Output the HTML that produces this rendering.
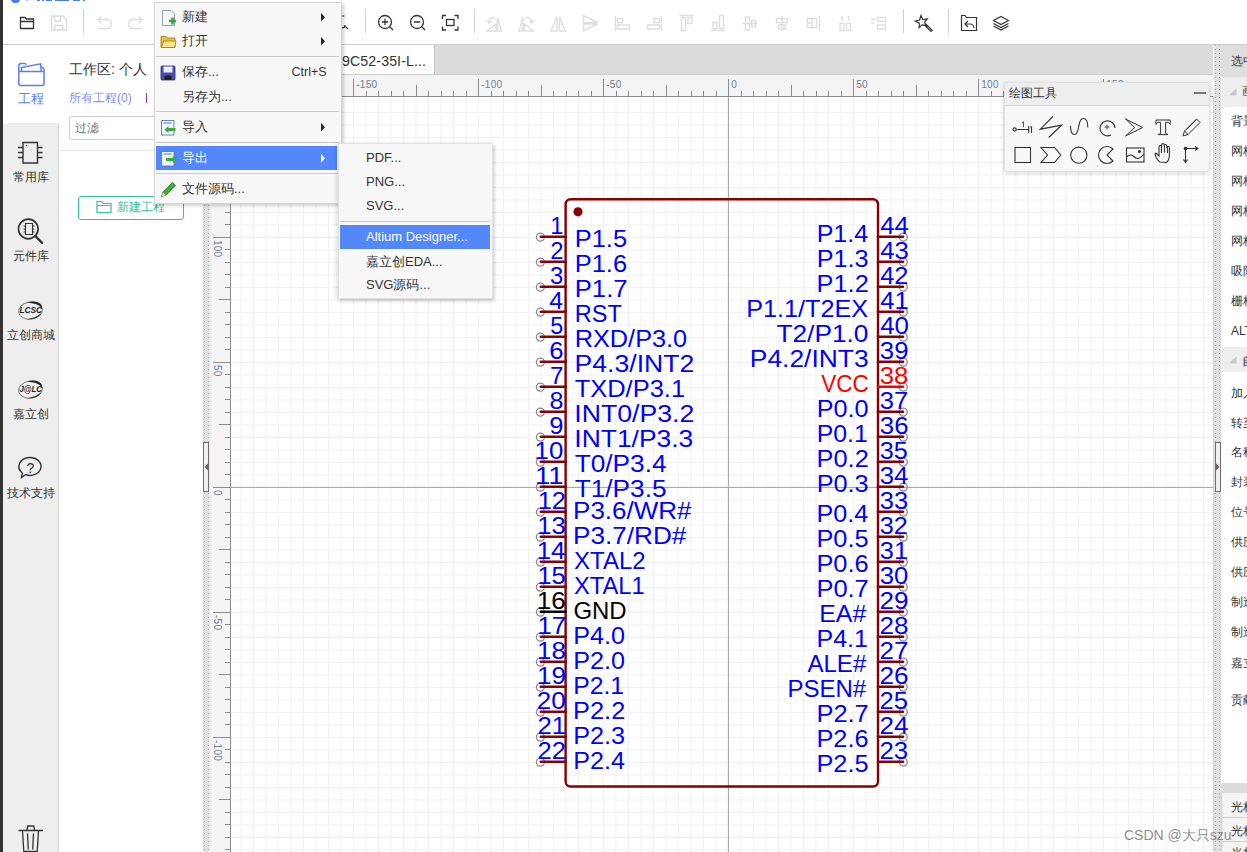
<!DOCTYPE html>
<html><head><meta charset="utf-8">
<style>
html,body{margin:0;padding:0;}
body{width:1247px;height:852px;overflow:hidden;position:relative;background:#fff;font-family:"Liberation Sans",sans-serif;color:#333;}
.abs{position:absolute;}
svg{display:block;}
.menu{position:absolute;background:#f8f8f8;border:1px solid #d4d4d4;box-shadow:2px 2px 3px rgba(0,0,0,0.18);}
.mi{position:absolute;left:0;right:0;height:24px;font-size:13px;line-height:24px;color:#333;}
.sep{position:absolute;left:2px;right:2px;height:0;border-top:1px solid #c8c8c8;border-bottom:1px solid #fff;}
.navt{position:absolute;left:3px;width:55px;text-align:center;font-size:12px;color:#333;line-height:14px;white-space:nowrap;}
.rp{position:absolute;left:1231px;font-size:12px;color:#333;line-height:14px;white-space:nowrap;}
</style></head>
<body>
<!-- canvas -->
<svg class="abs" style="left:0;top:0" width="1247" height="852" viewBox="0 0 1247 852">
<path d="M240.90 96V852M253.40 96V852M265.90 96V852M278.40 96V852M290.90 96V852M303.40 96V852M315.90 96V852M328.40 96V852M340.90 96V852M353.40 96V852M365.90 96V852M378.40 96V852M390.90 96V852M403.40 96V852M415.90 96V852M428.40 96V852M440.90 96V852M453.40 96V852M465.90 96V852M478.40 96V852M490.90 96V852M503.40 96V852M515.90 96V852M528.40 96V852M540.90 96V852M553.40 96V852M565.90 96V852M578.40 96V852M590.90 96V852M603.40 96V852M615.90 96V852M628.40 96V852M640.90 96V852M653.40 96V852M665.90 96V852M678.40 96V852M690.90 96V852M703.40 96V852M715.90 96V852M728.40 96V852M740.90 96V852M753.40 96V852M765.90 96V852M778.40 96V852M790.90 96V852M803.40 96V852M815.90 96V852M828.40 96V852M840.90 96V852M853.40 96V852M865.90 96V852M878.40 96V852M890.90 96V852M903.40 96V852M915.90 96V852M928.40 96V852M940.90 96V852M953.40 96V852M965.90 96V852M978.40 96V852M990.90 96V852M1003.40 96V852M1015.90 96V852M1028.40 96V852M1040.90 96V852M1053.40 96V852M1065.90 96V852M1078.40 96V852M1090.90 96V852M1103.40 96V852M1115.90 96V852M1128.40 96V852M1140.90 96V852M1153.40 96V852M1165.90 96V852M1178.40 96V852M1190.90 96V852M1203.40 96V852M231 99.90H1213M231 112.40H1213M231 124.90H1213M231 137.40H1213M231 149.90H1213M231 162.40H1213M231 174.90H1213M231 187.40H1213M231 199.90H1213M231 212.40H1213M231 224.90H1213M231 237.40H1213M231 249.90H1213M231 262.40H1213M231 274.90H1213M231 287.40H1213M231 299.90H1213M231 312.40H1213M231 324.90H1213M231 337.40H1213M231 349.90H1213M231 362.40H1213M231 374.90H1213M231 387.40H1213M231 399.90H1213M231 412.40H1213M231 424.90H1213M231 437.40H1213M231 449.90H1213M231 462.40H1213M231 474.90H1213M231 487.40H1213M231 499.90H1213M231 512.40H1213M231 524.90H1213M231 537.40H1213M231 549.90H1213M231 562.40H1213M231 574.90H1213M231 587.40H1213M231 599.90H1213M231 612.40H1213M231 624.90H1213M231 637.40H1213M231 649.90H1213M231 662.40H1213M231 674.90H1213M231 687.40H1213M231 699.90H1213M231 712.40H1213M231 724.90H1213M231 737.40H1213M231 749.90H1213M231 762.40H1213M231 774.90H1213M231 787.40H1213M231 799.90H1213M231 812.40H1213M231 824.90H1213M231 837.40H1213M231 849.90H1213" stroke="#f0f0f0" stroke-width="1" fill="none"/>
<path d="M728.4 96V852M231 487.4H1213" stroke="#a0a0a0" stroke-width="1" fill="none"/>
<rect x="565.6" y="199.2" width="312.4" height="587.3" rx="5" ry="5" fill="none" stroke="#880000" stroke-width="2.4"/>
<circle cx="578" cy="211.8" r="4.6" fill="#880000"/>
<circle cx="540.4" cy="237.1" r="4" fill="none" stroke="#8c8c8c" stroke-width="1.3"/>
<line x1="540.8" y1="236.8" x2="565.6" y2="236.8" stroke="#880000" stroke-width="2.6" stroke-linecap="round"/>
<circle cx="540.4" cy="262.1" r="4" fill="none" stroke="#8c8c8c" stroke-width="1.3"/>
<line x1="540.8" y1="261.8" x2="565.6" y2="261.8" stroke="#880000" stroke-width="2.6" stroke-linecap="round"/>
<circle cx="540.4" cy="287.1" r="4" fill="none" stroke="#8c8c8c" stroke-width="1.3"/>
<line x1="540.8" y1="286.8" x2="565.6" y2="286.8" stroke="#880000" stroke-width="2.6" stroke-linecap="round"/>
<circle cx="540.4" cy="312.1" r="4" fill="none" stroke="#8c8c8c" stroke-width="1.3"/>
<line x1="540.8" y1="311.8" x2="565.6" y2="311.8" stroke="#880000" stroke-width="2.6" stroke-linecap="round"/>
<circle cx="540.4" cy="337.1" r="4" fill="none" stroke="#8c8c8c" stroke-width="1.3"/>
<line x1="540.8" y1="336.8" x2="565.6" y2="336.8" stroke="#880000" stroke-width="2.6" stroke-linecap="round"/>
<circle cx="540.4" cy="362.1" r="4" fill="none" stroke="#8c8c8c" stroke-width="1.3"/>
<line x1="540.8" y1="361.8" x2="565.6" y2="361.8" stroke="#880000" stroke-width="2.6" stroke-linecap="round"/>
<circle cx="540.4" cy="387.1" r="4" fill="none" stroke="#8c8c8c" stroke-width="1.3"/>
<line x1="540.8" y1="386.8" x2="565.6" y2="386.8" stroke="#880000" stroke-width="2.6" stroke-linecap="round"/>
<circle cx="540.4" cy="412.1" r="4" fill="none" stroke="#8c8c8c" stroke-width="1.3"/>
<line x1="540.8" y1="411.8" x2="565.6" y2="411.8" stroke="#880000" stroke-width="2.6" stroke-linecap="round"/>
<circle cx="540.4" cy="437.1" r="4" fill="none" stroke="#8c8c8c" stroke-width="1.3"/>
<line x1="540.8" y1="436.8" x2="565.6" y2="436.8" stroke="#880000" stroke-width="2.6" stroke-linecap="round"/>
<circle cx="540.4" cy="462.1" r="4" fill="none" stroke="#8c8c8c" stroke-width="1.3"/>
<line x1="540.8" y1="461.8" x2="565.6" y2="461.8" stroke="#880000" stroke-width="2.6" stroke-linecap="round"/>
<circle cx="540.4" cy="487.1" r="4" fill="none" stroke="#8c8c8c" stroke-width="1.3"/>
<line x1="540.8" y1="486.8" x2="565.6" y2="486.8" stroke="#880000" stroke-width="2.6" stroke-linecap="round"/>
<circle cx="540.4" cy="512.1" r="4" fill="none" stroke="#8c8c8c" stroke-width="1.3"/>
<line x1="540.8" y1="511.8" x2="565.6" y2="511.8" stroke="#880000" stroke-width="2.6" stroke-linecap="round"/>
<circle cx="540.4" cy="537.1" r="4" fill="none" stroke="#8c8c8c" stroke-width="1.3"/>
<line x1="540.8" y1="536.8" x2="565.6" y2="536.8" stroke="#880000" stroke-width="2.6" stroke-linecap="round"/>
<circle cx="540.4" cy="562.1" r="4" fill="none" stroke="#8c8c8c" stroke-width="1.3"/>
<line x1="540.8" y1="561.8" x2="565.6" y2="561.8" stroke="#880000" stroke-width="2.6" stroke-linecap="round"/>
<circle cx="540.4" cy="587.1" r="4" fill="none" stroke="#8c8c8c" stroke-width="1.3"/>
<line x1="540.8" y1="586.8" x2="565.6" y2="586.8" stroke="#880000" stroke-width="2.6" stroke-linecap="round"/>
<circle cx="540.4" cy="612.1" r="4" fill="none" stroke="#8c8c8c" stroke-width="1.3"/>
<line x1="540.8" y1="611.8" x2="565.6" y2="611.8" stroke="#000000" stroke-width="2.6" stroke-linecap="round"/>
<circle cx="540.4" cy="637.1" r="4" fill="none" stroke="#8c8c8c" stroke-width="1.3"/>
<line x1="540.8" y1="636.8" x2="565.6" y2="636.8" stroke="#880000" stroke-width="2.6" stroke-linecap="round"/>
<circle cx="540.4" cy="662.1" r="4" fill="none" stroke="#8c8c8c" stroke-width="1.3"/>
<line x1="540.8" y1="661.8" x2="565.6" y2="661.8" stroke="#880000" stroke-width="2.6" stroke-linecap="round"/>
<circle cx="540.4" cy="687.1" r="4" fill="none" stroke="#8c8c8c" stroke-width="1.3"/>
<line x1="540.8" y1="686.8" x2="565.6" y2="686.8" stroke="#880000" stroke-width="2.6" stroke-linecap="round"/>
<circle cx="540.4" cy="712.1" r="4" fill="none" stroke="#8c8c8c" stroke-width="1.3"/>
<line x1="540.8" y1="711.8" x2="565.6" y2="711.8" stroke="#880000" stroke-width="2.6" stroke-linecap="round"/>
<circle cx="540.4" cy="737.1" r="4" fill="none" stroke="#8c8c8c" stroke-width="1.3"/>
<line x1="540.8" y1="736.8" x2="565.6" y2="736.8" stroke="#880000" stroke-width="2.6" stroke-linecap="round"/>
<circle cx="540.4" cy="762.1" r="4" fill="none" stroke="#8c8c8c" stroke-width="1.3"/>
<line x1="540.8" y1="761.8" x2="565.6" y2="761.8" stroke="#880000" stroke-width="2.6" stroke-linecap="round"/>
<circle cx="903.3" cy="237.1" r="4" fill="none" stroke="#8c8c8c" stroke-width="1.3"/>
<line x1="878" y1="236.8" x2="903" y2="236.8" stroke="#880000" stroke-width="2.6" stroke-linecap="round"/>
<circle cx="903.3" cy="262.1" r="4" fill="none" stroke="#8c8c8c" stroke-width="1.3"/>
<line x1="878" y1="261.8" x2="903" y2="261.8" stroke="#880000" stroke-width="2.6" stroke-linecap="round"/>
<circle cx="903.3" cy="287.1" r="4" fill="none" stroke="#8c8c8c" stroke-width="1.3"/>
<line x1="878" y1="286.8" x2="903" y2="286.8" stroke="#880000" stroke-width="2.6" stroke-linecap="round"/>
<circle cx="903.3" cy="312.1" r="4" fill="none" stroke="#8c8c8c" stroke-width="1.3"/>
<line x1="878" y1="311.8" x2="903" y2="311.8" stroke="#880000" stroke-width="2.6" stroke-linecap="round"/>
<circle cx="903.3" cy="337.1" r="4" fill="none" stroke="#8c8c8c" stroke-width="1.3"/>
<line x1="878" y1="336.8" x2="903" y2="336.8" stroke="#880000" stroke-width="2.6" stroke-linecap="round"/>
<circle cx="903.3" cy="362.1" r="4" fill="none" stroke="#8c8c8c" stroke-width="1.3"/>
<line x1="878" y1="361.8" x2="903" y2="361.8" stroke="#880000" stroke-width="2.6" stroke-linecap="round"/>
<circle cx="903.3" cy="387.1" r="4" fill="none" stroke="#8c8c8c" stroke-width="1.3"/>
<line x1="878" y1="386.8" x2="903" y2="386.8" stroke="#ff0000" stroke-width="2.6" stroke-linecap="round"/>
<circle cx="903.3" cy="412.1" r="4" fill="none" stroke="#8c8c8c" stroke-width="1.3"/>
<line x1="878" y1="411.8" x2="903" y2="411.8" stroke="#880000" stroke-width="2.6" stroke-linecap="round"/>
<circle cx="903.3" cy="437.1" r="4" fill="none" stroke="#8c8c8c" stroke-width="1.3"/>
<line x1="878" y1="436.8" x2="903" y2="436.8" stroke="#880000" stroke-width="2.6" stroke-linecap="round"/>
<circle cx="903.3" cy="462.1" r="4" fill="none" stroke="#8c8c8c" stroke-width="1.3"/>
<line x1="878" y1="461.8" x2="903" y2="461.8" stroke="#880000" stroke-width="2.6" stroke-linecap="round"/>
<circle cx="903.3" cy="487.1" r="4" fill="none" stroke="#8c8c8c" stroke-width="1.3"/>
<line x1="878" y1="486.8" x2="903" y2="486.8" stroke="#880000" stroke-width="2.6" stroke-linecap="round"/>
<circle cx="903.3" cy="512.1" r="4" fill="none" stroke="#8c8c8c" stroke-width="1.3"/>
<line x1="878" y1="511.8" x2="903" y2="511.8" stroke="#880000" stroke-width="2.6" stroke-linecap="round"/>
<circle cx="903.3" cy="537.1" r="4" fill="none" stroke="#8c8c8c" stroke-width="1.3"/>
<line x1="878" y1="536.8" x2="903" y2="536.8" stroke="#880000" stroke-width="2.6" stroke-linecap="round"/>
<circle cx="903.3" cy="562.1" r="4" fill="none" stroke="#8c8c8c" stroke-width="1.3"/>
<line x1="878" y1="561.8" x2="903" y2="561.8" stroke="#880000" stroke-width="2.6" stroke-linecap="round"/>
<circle cx="903.3" cy="587.1" r="4" fill="none" stroke="#8c8c8c" stroke-width="1.3"/>
<line x1="878" y1="586.8" x2="903" y2="586.8" stroke="#880000" stroke-width="2.6" stroke-linecap="round"/>
<circle cx="903.3" cy="612.1" r="4" fill="none" stroke="#8c8c8c" stroke-width="1.3"/>
<line x1="878" y1="611.8" x2="903" y2="611.8" stroke="#880000" stroke-width="2.6" stroke-linecap="round"/>
<circle cx="903.3" cy="637.1" r="4" fill="none" stroke="#8c8c8c" stroke-width="1.3"/>
<line x1="878" y1="636.8" x2="903" y2="636.8" stroke="#880000" stroke-width="2.6" stroke-linecap="round"/>
<circle cx="903.3" cy="662.1" r="4" fill="none" stroke="#8c8c8c" stroke-width="1.3"/>
<line x1="878" y1="661.8" x2="903" y2="661.8" stroke="#880000" stroke-width="2.6" stroke-linecap="round"/>
<circle cx="903.3" cy="687.1" r="4" fill="none" stroke="#8c8c8c" stroke-width="1.3"/>
<line x1="878" y1="686.8" x2="903" y2="686.8" stroke="#880000" stroke-width="2.6" stroke-linecap="round"/>
<circle cx="903.3" cy="712.1" r="4" fill="none" stroke="#8c8c8c" stroke-width="1.3"/>
<line x1="878" y1="711.8" x2="903" y2="711.8" stroke="#880000" stroke-width="2.6" stroke-linecap="round"/>
<circle cx="903.3" cy="737.1" r="4" fill="none" stroke="#8c8c8c" stroke-width="1.3"/>
<line x1="878" y1="736.8" x2="903" y2="736.8" stroke="#880000" stroke-width="2.6" stroke-linecap="round"/>
<circle cx="903.3" cy="762.1" r="4" fill="none" stroke="#8c8c8c" stroke-width="1.3"/>
<line x1="878" y1="761.8" x2="903" y2="761.8" stroke="#880000" stroke-width="2.6" stroke-linecap="round"/>
<g font-family="Liberation Sans, sans-serif" font-size="23.8"><text transform="translate(574.71,246.80) scale(1.0689,1)" fill="#0000ff">P1.5</text><text transform="translate(550.28,234.10) scale(0.9943,1)" fill="#0000ff">1</text><text transform="translate(574.71,271.80) scale(1.0700,1)" fill="#0000ff">P1.6</text><text transform="translate(550.20,259.10) scale(1.0047,1)" fill="#0000ff">2</text><text transform="translate(574.69,296.80) scale(1.0804,1)" fill="#0000ff">P1.7</text><text transform="translate(550.09,284.10) scale(0.9999,1)" fill="#0000ff">3</text><text transform="translate(574.87,321.80) scale(0.9889,1)" fill="#0000ff">RST</text><text transform="translate(549.23,309.10) scale(1.0421,1)" fill="#0000ff">4</text><text transform="translate(574.72,346.80) scale(1.0635,1)" fill="#0000ff">RXD/P3.0</text><text transform="translate(550.27,334.10) scale(0.9812,1)" fill="#0000ff">5</text><text transform="translate(574.62,371.80) scale(1.1163,1)" fill="#0000ff">P4.3/INT2</text><text transform="translate(549.15,359.10) scale(1.0770,1)" fill="#0000ff">6</text><text transform="translate(574.74,396.80) scale(1.0699,1)" fill="#0000ff">TXD/P3.1</text><text transform="translate(550.04,384.10) scale(1.0178,1)" fill="#0000ff">7</text><text transform="translate(574.35,421.80) scale(1.1188,1)" fill="#0000ff">INT0/P3.2</text><text transform="translate(549.45,409.10) scale(1.0525,1)" fill="#0000ff">8</text><text transform="translate(574.37,446.80) scale(1.1094,1)" fill="#0000ff">INT1/P3.3</text><text transform="translate(549.28,434.10) scale(1.0748,1)" fill="#0000ff">9</text><text transform="translate(574.72,471.80) scale(1.1019,1)" fill="#0000ff">T0/P3.4</text><text transform="translate(534.56,459.10) scale(1.0853,1)" fill="#0000ff">10</text><text transform="translate(574.72,496.80) scale(1.1020,1)" fill="#0000ff">T1/P3.5</text><text transform="translate(535.04,484.10) scale(1.1570,1)" fill="#0000ff">11</text><text transform="translate(573.07,519.10) scale(1.0911,1)" fill="#0000ff">P3.6/WR&#35;</text><text transform="translate(537.77,509.10) scale(1.0655,1)" fill="#0000ff">12</text><text transform="translate(573.06,544.10) scale(1.0986,1)" fill="#0000ff">P3.7/RD&#35;</text><text transform="translate(537.28,534.10) scale(1.0779,1)" fill="#0000ff">13</text><text transform="translate(574.07,569.10) scale(1.0075,1)" fill="#0000ff">XTAL2</text><text transform="translate(536.70,559.10) scale(1.0864,1)" fill="#0000ff">14</text><text transform="translate(574.08,594.10) scale(0.9952,1)" fill="#0000ff">XTAL1</text><text transform="translate(537.48,584.10) scale(1.0678,1)" fill="#0000ff">15</text><text transform="translate(573.40,619.10) scale(1.0064,1)" fill="#000000">GND</text><text transform="translate(536.85,609.10) scale(1.0948,1)" fill="#000000">16</text><text transform="translate(573.13,644.10) scale(1.0586,1)" fill="#0000ff">P4.0</text><text transform="translate(537.41,634.10) scale(1.0795,1)" fill="#0000ff">17</text><text transform="translate(573.13,669.10) scale(1.0586,1)" fill="#0000ff">P2.0</text><text transform="translate(537.00,659.10) scale(1.0888,1)" fill="#0000ff">18</text><text transform="translate(573.17,694.10) scale(1.0401,1)" fill="#0000ff">P2.1</text><text transform="translate(537.04,684.10) scale(1.0912,1)" fill="#0000ff">19</text><text transform="translate(573.12,719.10) scale(1.0652,1)" fill="#0000ff">P2.2</text><text transform="translate(536.77,709.10) scale(1.0925,1)" fill="#0000ff">20</text><text transform="translate(573.13,744.10) scale(1.0613,1)" fill="#0000ff">P2.3</text><text transform="translate(537.40,734.10) scale(1.0780,1)" fill="#0000ff">21</text><text transform="translate(573.14,769.10) scale(1.0580,1)" fill="#0000ff">P2.4</text><text transform="translate(537.57,759.10) scale(1.0733,1)" fill="#0000ff">22</text><text transform="translate(816.64,241.50) scale(1.0537,1)" fill="#0000ff">P1.4</text><text transform="translate(880.23,234.10) scale(1.0879,1)" fill="#0000ff">44</text><text transform="translate(816.63,266.50) scale(1.0613,1)" fill="#0000ff">P1.3</text><text transform="translate(880.23,259.10) scale(1.0798,1)" fill="#0000ff">43</text><text transform="translate(816.62,291.50) scale(1.0652,1)" fill="#0000ff">P1.2</text><text transform="translate(880.24,284.10) scale(1.0681,1)" fill="#0000ff">42</text><text transform="translate(746.23,316.50) scale(1.0582,1)" fill="#0000ff">P1.1/T2EX</text><text transform="translate(880.24,309.10) scale(1.0727,1)" fill="#0000ff">41</text><text transform="translate(776.42,341.50) scale(1.1047,1)" fill="#0000ff">T2/P1.0</text><text transform="translate(880.23,334.10) scale(1.0869,1)" fill="#0000ff">40</text><text transform="translate(749.84,366.50) scale(1.1087,1)" fill="#0000ff">P4.2/INT3</text><text transform="translate(879.82,359.10) scale(1.0826,1)" fill="#0000ff">39</text><text transform="translate(821.31,391.50) scale(0.9459,1)" fill="#ff0000">VCC</text><text transform="translate(879.82,384.10) scale(1.0803,1)" fill="#ff0000">38</text><text transform="translate(816.63,416.50) scale(1.0586,1)" fill="#0000ff">P0.0</text><text transform="translate(879.83,409.10) scale(1.0713,1)" fill="#0000ff">37</text><text transform="translate(816.66,441.50) scale(1.0444,1)" fill="#0000ff">P0.1</text><text transform="translate(879.82,434.10) scale(1.0860,1)" fill="#0000ff">36</text><text transform="translate(816.62,466.50) scale(1.0652,1)" fill="#0000ff">P0.2</text><text transform="translate(879.84,459.10) scale(1.0600,1)" fill="#0000ff">35</text><text transform="translate(816.63,491.50) scale(1.0613,1)" fill="#0000ff">P0.3</text><text transform="translate(879.82,484.10) scale(1.0781,1)" fill="#0000ff">34</text><text transform="translate(816.44,521.50) scale(1.0580,1)" fill="#0000ff">P0.4</text><text transform="translate(879.83,509.10) scale(1.0698,1)" fill="#0000ff">33</text><text transform="translate(816.42,546.50) scale(1.0645,1)" fill="#0000ff">P0.5</text><text transform="translate(879.84,534.10) scale(1.0578,1)" fill="#0000ff">32</text><text transform="translate(816.42,571.50) scale(1.0656,1)" fill="#0000ff">P0.6</text><text transform="translate(879.84,559.10) scale(1.0625,1)" fill="#0000ff">31</text><text transform="translate(816.41,596.50) scale(1.0695,1)" fill="#0000ff">P0.7</text><text transform="translate(879.83,584.10) scale(1.0770,1)" fill="#0000ff">30</text><text transform="translate(819.26,621.50) scale(1.0458,1)" fill="#0000ff">EA&#35;</text><text transform="translate(879.49,609.10) scale(1.0983,1)" fill="#0000ff">29</text><text transform="translate(816.45,646.50) scale(1.0510,1)" fill="#0000ff">P4.1</text><text transform="translate(879.50,634.10) scale(1.0959,1)" fill="#0000ff">28</text><text transform="translate(807.45,671.50) scale(1.0108,1)" fill="#0000ff">ALE&#35;</text><text transform="translate(879.51,659.10) scale(1.0869,1)" fill="#0000ff">27</text><text transform="translate(787.43,696.50) scale(1.0106,1)" fill="#0000ff">PSEN&#35;</text><text transform="translate(879.49,684.10) scale(1.1017,1)" fill="#0000ff">26</text><text transform="translate(816.41,721.50) scale(1.0695,1)" fill="#0000ff">P2.7</text><text transform="translate(879.52,709.10) scale(1.0754,1)" fill="#0000ff">25</text><text transform="translate(816.42,746.50) scale(1.0656,1)" fill="#0000ff">P2.6</text><text transform="translate(879.50,734.10) scale(1.0935,1)" fill="#0000ff">24</text><text transform="translate(816.42,771.50) scale(1.0645,1)" fill="#0000ff">P2.5</text><text transform="translate(879.51,759.10) scale(1.0853,1)" fill="#0000ff">23</text></g>
<rect x="209" y="75" width="1004" height="21.5" fill="#f4f4f4"/>
<path d="M209 96.5H1213M241.50 91V96M253.50 91V96M266.50 91V96M278.50 91V96M291.50 85V96M303.50 91V96M316.50 91V96M328.50 91V96M341.50 91V96M353.50 79V96M366.50 91V96M378.50 91V96M391.50 91V96M403.50 91V96M416.50 85V96M428.50 91V96M441.50 91V96M453.50 91V96M466.50 91V96M478.50 79V96M491.50 91V96M503.50 91V96M516.50 91V96M528.50 91V96M541.50 85V96M553.50 91V96M566.50 91V96M578.50 91V96M591.50 91V96M603.50 79V96M616.50 91V96M628.50 91V96M641.50 91V96M653.50 91V96M666.50 85V96M678.50 91V96M691.50 91V96M703.50 91V96M716.50 91V96M728.50 79V96M741.50 91V96M753.50 91V96M766.50 91V96M778.50 91V96M791.50 85V96M803.50 91V96M816.50 91V96M828.50 91V96M841.50 91V96M853.50 79V96M866.50 91V96M878.50 91V96M891.50 91V96M903.50 91V96M916.50 85V96M928.50 91V96M941.50 91V96M953.50 91V96M966.50 91V96M978.50 79V96M991.50 91V96M1003.50 91V96M1016.50 91V96M1028.50 91V96M1041.50 85V96M1053.50 91V96M1066.50 91V96M1078.50 91V96M1091.50 91V96M1103.50 79V96M1116.50 91V96M1128.50 91V96M1141.50 91V96M1153.50 91V96M1166.50 85V96M1178.50 91V96M1191.50 91V96M1203.50 91V96" stroke="#8c8c8c" stroke-width="1" fill="none"/>
<g font-family="Liberation Sans, sans-serif" font-size="10" letter-spacing="0.3" fill="#6b7f95"><text x="356.20" y="87.7">-150</text><text x="481.20" y="87.7">-100</text><text x="606.20" y="87.7">-50</text><text x="731.20" y="87.7">0</text><text x="856.20" y="87.7">50</text><text x="981.20" y="87.7">100</text><text x="1106.20" y="87.7">150</text></g>
<rect x="209" y="96" width="22" height="756" fill="#f4f4f4"/>
<path d="M230.5 96.5V852M225 849.50H230.5M225 837.50H230.5M225 824.50H230.5M225 812.50H230.5M218.8 799.50H230.5M225 787.50H230.5M225 774.50H230.5M225 762.50H230.5M225 749.50H230.5M213 737.50H230.5M225 724.50H230.5M225 712.50H230.5M225 699.50H230.5M225 687.50H230.5M218.8 674.50H230.5M225 662.50H230.5M225 649.50H230.5M225 637.50H230.5M225 624.50H230.5M213 612.50H230.5M225 599.50H230.5M225 587.50H230.5M225 574.50H230.5M225 562.50H230.5M218.8 549.50H230.5M225 537.50H230.5M225 524.50H230.5M225 512.50H230.5M225 499.50H230.5M213 487.50H230.5M225 474.50H230.5M225 462.50H230.5M225 449.50H230.5M225 437.50H230.5M218.8 424.50H230.5M225 412.50H230.5M225 399.50H230.5M225 387.50H230.5M225 374.50H230.5M213 362.50H230.5M225 349.50H230.5M225 337.50H230.5M225 324.50H230.5M225 312.50H230.5M218.8 299.50H230.5M225 287.50H230.5M225 274.50H230.5M225 262.50H230.5M225 249.50H230.5M213 237.50H230.5M225 224.50H230.5M225 212.50H230.5M225 199.50H230.5M225 187.50H230.5M218.8 174.50H230.5M225 162.50H230.5M225 149.50H230.5M225 137.50H230.5M225 124.50H230.5M213 112.50H230.5M225 99.50H230.5" stroke="#8c8c8c" stroke-width="1" fill="none"/>
<g font-family="Liberation Sans, sans-serif" font-size="10" letter-spacing="0.3" fill="#6b7f95"><text transform="translate(214,739.90) rotate(90)">-100</text><text transform="translate(214,614.90) rotate(90)">-50</text><text transform="translate(214,489.90) rotate(90)">0</text><text transform="translate(214,364.90) rotate(90)">50</text><text transform="translate(214,239.90) rotate(90)">100</text><text transform="translate(214,114.90) rotate(90)">150</text></g>
</svg>

<!-- tab bar -->
<div class="abs" style="left:209px;top:44px;width:1004px;height:31px;background:#dcdcdc;border-top:1px solid #c8c8c8;box-sizing:border-box;"></div>
<div class="abs" style="left:209px;top:45px;width:226px;height:29px;background:#fff;border-right:1px solid #c6c6c6;box-sizing:border-box;"></div>
<div class="abs" style="left:342px;top:51.5px;font-size:14.2px;color:#333;line-height:18px;white-space:nowrap;letter-spacing:0.1px;">9C52-35I-L...</div>
<div class="abs" style="left:209px;top:74px;width:1004px;height:1px;background:#cdcdcd;"></div>

<!-- toolbar -->
<div class="abs" style="left:0;top:0;width:1247px;height:44px;background:#fff;"></div>
<div class="abs" style="left:0;top:44px;width:1247px;height:1px;background:#cfcfcf;"></div>
<!-- title fragment -->
<div class="abs" style="left:11px;top:-5.5px;width:8.5px;height:8.5px;border-radius:50%;background:#4a7cf0;"></div>
<div class="abs" style="left:25px;top:0;width:4px;height:1px;background:#c8d4f8;"></div>
<div class="abs" style="left:37px;top:0;width:3px;height:1.2px;background:#4a7cf0;"></div>
<div class="abs" style="left:41.5px;top:0;width:2.5px;height:1.2px;background:#4a7cf0;"></div>
<div class="abs" style="left:46px;top:0;width:5.5px;height:1.2px;background:#4a7cf0;"></div>
<div class="abs" style="left:55px;top:0;width:14px;height:1.2px;background:#4a7cf0;"></div>
<div class="abs" style="left:72.5px;top:0;width:7.5px;height:1.2px;background:#4a7cf0;"></div>
<div class="abs" style="left:82.5px;top:0;width:2px;height:1.2px;background:#4a7cf0;"></div>
<svg class="abs" style="left:0;top:0" width="1247" height="44" viewBox="0 0 1247 44">
<g fill="none" stroke-width="1.3">
 <!-- open folder -->
 <path d="M20.5 28.5V17.5h4.5l1.5 1.5h7V28.5Z M20.5 21.5h13" stroke="#333"/>
 <!-- save -->
 <path d="M51.5 16h11.5l3.5 3.5V30H51.5Z M54.5 16v5h6v-5 M54.5 30v-4.5h8V30" stroke="#dcdcdc" stroke-width="1.5"/>
 <!-- undo redo -->
 <path d="M98 19.5h9a4.5 4.5 0 0 1 0 9h-9 M101 16.5l-3 3 3 3" stroke="#dcdcdc" stroke-width="1.5"/>
 <path d="M142 19.5h-9a4.5 4.5 0 0 0 0 9h9 M139 16.5l3 3-3 3" stroke="#dcdcdc" stroke-width="1.5"/>
 <!-- zoom in / out / fit -->
 <circle cx="385" cy="22" r="6.5" stroke="#333"/><path d="M389.5 26.5l3.5 3.5 M385 18.8v6.4 M381.8 22h6.4" stroke="#333"/>
 <circle cx="417" cy="22" r="6.5" stroke="#333"/><path d="M421.5 26.5l3.5 3.5 M413.8 22h6.4" stroke="#333"/>
 <path d="M442.5 19v-3.5h3.5 M454.5 15.5h3.5v3.5 M458 26.5v3.5h-3.5 M446 30h-3.5v-3.5" stroke="#333"/>
 <rect x="446.5" y="19.5" width="7.5" height="6" stroke="#333"/>
 <!-- partial icon behind menu -->
 <path d="M341 16h3.5 M342 22a3 3 0 1 0 3 3 M345.5 26.5l2.5 2.5" stroke="#333" stroke-width="1.2"/>
</g>
<g fill="none" stroke="#dedede" stroke-width="1.4">
 <!-- rotate left -->
 <path d="M497.5 17.5L501.5 31h-4z M496 24L487 31h9z M495 17.5a5 5 0 0 0-6 4.5 M487 20.5l2 2.5 2.5-2"/>
 <!-- rotate right -->
 <path d="M523 17.5L519 31h4z M524.5 24L533.5 31h-9z M525.5 17.5a5 5 0 0 1 6 4.5 M533.5 20.5l-2 2.5-2.5-2"/>
 <!-- flip h -->
 <path d="M557 16.5L551 31h6z M559.5 16.5L565.5 31h-6z"/>
 <!-- flip v -->
 <path d="M583.5 15.5v7l14 0z M583.5 30.5v-6.5l14 0z"/>
 <!-- align left -->
 <path d="M615.5 16v15 M617.5 18.5h5v4h-5z M617.5 25h12v4h-12z"/>
 <!-- align right -->
 <path d="M661.5 16v15 M654 18.5h5.5v4H654z M647.5 25h12v4h-12z"/>
 <!-- align top -->
 <path d="M679 15.5h15 M681.5 17.5v13h4v-13z M688 17.5v6h4v-6z"/>
 <!-- align bottom -->
 <path d="M710.5 30.5h15 M713 28.5v-6h4v6z M719.5 28.5v-13h4v13z"/>
 <!-- align vcenter -->
 <path d="M742.5 23.5h15 M745.5 17v13h4V17z M751.5 20.5v6h4v-6z"/>
 <!-- align hcenter -->
 <path d="M782 16v15 M776.5 18.5h11v4h-11z M778.5 25h7v4h-7z"/>
 <!-- distribute -->
 <path d="M807.5 18.5h9v9h-9z M812 18.5v9 M807.5 23h4.5 M819.5 16v15"/>
 <path d="M840 23.5v7h4v-7z M846.5 23.5v7h4v-7z M842 16v5 M848.5 16v5"/>
 <path d="M871 23h4 M877.5 17.5h8v4h-8z M877.5 25h8v4h-8z M871 19.5h4"/>
</g>
<g fill="none" stroke="#cfcfcf" stroke-width="1">
 <path d="M83.5 9v24.5 M365.5 9v24.5 M474.5 9v24.5 M903.5 9v24.5 M948.5 9v24.5"/>
</g>
<g fill="none" stroke="#333" stroke-width="1.2">
 <!-- magic wand -->
 <path d="M921 15.5l1.8 4.2 4.5-0.8-2.8 3.5 2 3.7-4.2-1.5-3.2 3 0.2-4.4-4-2 4.3-1.2z M924.5 25l6.5 6.5 1.2-1.2-6.5-6.5"/>
 <!-- folder back -->
 <path d="M961.5 30.5V15.5h3.5l1.5 2h10v13Z M968 21l-3 3 3 3 M965 24h5a4 4 0 0 1 4 4"/>
 <!-- layers -->
 <path d="M1001 16.5l7.5 4-7.5 4-7.5-4z M993.5 23.5l7.5 4 7.5-4 M993.5 26l7.5 4 7.5-4"/>
</g>
</svg>


<!-- left nav -->
<div class="abs" style="left:0;top:0;width:3px;height:852px;background:#333;"></div>
<div class="abs" style="left:3px;top:123px;width:55px;height:729px;background:#eeeeee;border-right:1px solid #d8d8d8;"></div>
<svg class="abs" style="left:3px;top:45px" width="55" height="807" viewBox="3 45 55 807">
<g fill="none" stroke-width="1.6">
 <!-- project folder (blue) -->
 <path d="M18.8 71.5H44V83.5a2 2 0 0 1-2 2H20.8a2 2 0 0 1-2-2Z M18.8 72V66a2.5 2.5 0 0 1 2.5-2.5H24.5a2 2 0 0 1 1.8 1.2 M21.8 71.2L21.3 67.6 40.5 63.8 41.3 71.2 M41.8 67.5a2 2 0 0 1 2.2 2V72" stroke="#5b7cfa" stroke-width="1.5"/>
 <!-- chip -->
 <path d="M23 142.5h14.5v20.5H23Z M18 147.5h5 M18 152.5h5 M18 157.5h5 M37.5 147.5h5 M37.5 152.5h5 M37.5 157.5h5" stroke="#333" stroke-width="1.4"/>
 <circle cx="26.5" cy="145.5" r="0.8" fill="#333" stroke="none"/>
 <!-- magnifier -->
 <circle cx="28.3" cy="229" r="9.8" stroke="#333" stroke-width="1.7"/>
 <path d="M35.3 236l6.8 6.8" stroke="#333" stroke-width="2.4" stroke-linecap="round"/>
 <path d="M25.5 223.5h7v11h-7z M23.5 226h2 M23.5 229h2 M23.5 232h2 M32.5 226h2 M32.5 229h2 M32.5 232h2" stroke="#333" stroke-width="1.1"/>
 <!-- help bubble -->
 <path d="M29.5 457.5a11 9 0 1 1-4 17.2l-4 2.8 0.8-4.5a11 9 0 0 1 7.2-15.5z" stroke="#333" stroke-width="1.4"/>
 <!-- trash -->
 <path d="M18.5 830.5h24.5 M27 830l0.8-4h6l0.8 4 M22.5 831l1.3 20.5h13.4l1.3-20.5 M27.5 833.5l0.8 16 M33.5 833.5l-0.8 16" stroke="#333" stroke-width="1.3"/>
</g>
<g font-family="Liberation Sans, sans-serif" font-style="italic" font-weight="bold" font-size="9.5" fill="#222">
 <text x="19.5" y="313" textLength="22.5" lengthAdjust="spacingAndGlyphs">LCSC</text>
 <text x="19.5" y="392" textLength="22.5" lengthAdjust="spacingAndGlyphs">J@LC</text>
</g>
<g fill="none" stroke="#333" stroke-width="0.6">
 <ellipse cx="30.5" cy="310.6" rx="12" ry="8.6" transform="rotate(-8 30.5 310.6)"/>
 <ellipse cx="30.5" cy="389.6" rx="12" ry="8.6" transform="rotate(-8 30.5 389.6)"/>
</g>
<g fill="#222">
 <path d="M27 302.5q10-3 14.5 2.5q1.5 2-0.5 4q0.5-5-14-6.5z"/>
 <path d="M41.5 313q-3 6-15 6.5q10-2 15-6.5z" />
 <path d="M27 381.5q10-3 14.5 2.5q1.5 2-0.5 4q0.5-5-14-6.5z"/>
 <path d="M41.5 392q-3 6-15 6.5q10-2 15-6.5z" />
</g>
<text x="39.5" y="473" font-family="Liberation Sans, sans-serif" font-size="14" fill="#333" text-anchor="middle" transform="translate(-9,0)">?</text>
</svg>
<div class="navt" style="top:91px;color:#5b7cfa;font-size:13px;line-height:16px;">工程</div>
<div class="navt" style="top:170px;">常用库</div>
<div class="navt" style="top:249px;">元件库</div>
<div class="navt" style="top:328px;">立创商城</div>
<div class="navt" style="top:407px;">嘉立创</div>
<div class="navt" style="top:486px;">技术支持</div>


<!-- left panel -->
<div class="abs" style="left:69px;top:61px;font-size:14px;color:#333;line-height:16px;white-space:nowrap;">工作区: 个人</div>
<div class="abs" style="left:69px;top:90px;font-size:12px;color:#7f8cff;line-height:16px;white-space:nowrap;">所有工程(0)</div>
<div class="abs" style="left:146px;top:92.5px;width:1.3px;height:10.5px;background:#9b3c9b;"></div>
<div class="abs" style="left:69px;top:115.5px;width:120px;height:24px;border:1px solid #cfcfcf;border-radius:3px;box-sizing:border-box;background:#fff;"></div>
<div class="abs" style="left:75px;top:120px;font-size:12px;color:#707070;line-height:16px;white-space:nowrap;">过滤</div>
<div class="abs" style="left:59px;top:150px;width:144px;height:1px;background:#e6e6e6;"></div>
<div class="abs" style="left:78px;top:196px;width:106px;height:24px;border:1px solid #34c0a0;border-radius:3px;box-sizing:border-box;"></div>
<svg class="abs" style="left:96px;top:200px" width="16" height="14" viewBox="0 0 16 14">
<path d="M1 2.5V12.5h14V3.5H7L5.5 1.5H1z M1 5.5h14" fill="none" stroke="#34c0a0" stroke-width="1.2"/>
</svg>
<div class="abs" style="left:117px;top:199px;font-size:12px;color:#34c0a0;line-height:16px;white-space:nowrap;">新建工程</div>


<!-- splitters -->
<svg class="abs" style="left:203px;top:45px" width="6.5" height="807"><defs><pattern id="dots" x="0" y="0" width="4" height="4" patternUnits="userSpaceOnUse"><rect x="1" y="0" width="1" height="1" fill="#9a9a9a"/><rect x="1" y="1" width="1" height="1" fill="#f2f2f2"/></pattern><pattern id="dots2" x="0" y="0" width="4" height="4" patternUnits="userSpaceOnUse"><rect x="1" y="0" width="1" height="1" fill="#9a9a9a"/><rect x="1" y="1" width="1" height="1" fill="#f2f2f2"/></pattern></defs><rect width="6.5" height="807" fill="#e0e0e0"/><rect x="0" width="4" height="807" fill="url(#dots)"/><rect x="4" width="2.5" height="807" fill="url(#dots)" transform="translate(0,0)"/></svg>
<div class="abs" style="left:203px;top:442px;width:6px;height:50px;background:#f0f0f0;border:1px solid #7a6a6a;box-sizing:border-box;"></div>
<svg class="abs" style="left:203px;top:442px" width="6" height="50"><path d="M1.5 25L5 21.5V28.5Z" fill="#6e6262"/></svg>

<div class="abs" style="left:1213px;top:45px;width:1.5px;height:807px;background:#fff;"></div><div class="abs" style="left:1213px;top:96px;width:1px;height:756px;background:#d2d2d2;"></div>
<svg class="abs" style="left:1214px;top:45px" width="7" height="807"><defs><pattern id="dotsr" x="0" y="0" width="4" height="4" patternUnits="userSpaceOnUse"><rect x="1" y="0" width="1" height="1" fill="#9a9a9a"/><rect x="1" y="1" width="1" height="1" fill="#f2f2f2"/></pattern></defs><rect width="7" height="807" fill="#e0e0e0"/><rect x="0" width="4" height="807" fill="url(#dotsr)"/><rect x="4" width="3" height="807" fill="url(#dotsr)"/></svg>
<div class="abs" style="left:1214.5px;top:442px;width:6px;height:50px;background:#f0f0f0;border:1px solid #7a6a6a;box-sizing:border-box;"></div>
<svg class="abs" style="left:1214.5px;top:442px" width="6" height="50"><path d="M4.5 25L1 21.5V28.5Z" fill="#6e6262"/></svg>

<!-- right panel -->
<div class="abs" style="left:1221px;top:45px;width:26px;height:32px;background:#dfdfdf;"></div>
<div class="abs" style="left:1221px;top:77px;width:26px;height:30px;background:#eeeeee;"></div>
<svg class="abs" style="left:1221px;top:77px" width="26" height="30"><path d="M8 18.5L15.5 11V18.5Z" fill="#c9c9c9"/></svg>
<div class="abs" style="left:1221px;top:347px;width:26px;height:25px;background:#eeeeee;"></div>
<svg class="abs" style="left:1221px;top:347px" width="26" height="30"><path d="M8 16.5L15.5 9V16.5Z" fill="#c9c9c9"/></svg>
<div class="rp" style="top:54px;">选中</div>
<div class="rp" style="top:84px;left:1241.5px;">画布</div>
<div class="rp" style="top:114px;">背景</div>
<div class="rp" style="top:144px;">网格</div>
<div class="rp" style="top:174px;">网格</div>
<div class="rp" style="top:204px;">网格</div>
<div class="rp" style="top:234px;">网格</div>
<div class="rp" style="top:264px;">吸附</div>
<div class="rp" style="top:294px;">栅格</div>
<div class="rp" style="top:324px;">ALT</div>
<div class="rp" style="top:354px;left:1241.5px;">自定义</div>
<div class="rp" style="top:386px;">加入</div>
<div class="rp" style="top:416px;">转至</div>
<div class="rp" style="top:445px;">名称</div>
<div class="rp" style="top:475px;">封装</div>
<div class="rp" style="top:505px;">位号</div>
<div class="rp" style="top:535px;">供应</div>
<div class="rp" style="top:565px;">供应</div>
<div class="rp" style="top:595px;">制造</div>
<div class="rp" style="top:625px;">制造</div>
<div class="rp" style="top:656px;">嘉立</div>
<div class="rp" style="top:693px;">贡献</div>
<div class="abs" style="left:1221px;top:783px;width:26px;height:10px;background:#dcdcdc;"></div>
<div class="abs" style="left:1221px;top:793px;width:26px;height:59px;background:#f4f4f4;border-left:1px solid #d0d0d0;box-sizing:border-box;"></div>
<div class="abs" style="left:1221px;top:817px;width:26px;height:1px;background:#d0d0d0;"></div>
<div class="abs" style="left:1221px;top:841px;width:26px;height:1px;background:#d0d0d0;"></div>
<div class="rp" style="top:800px;">光标</div>
<div class="rp" style="top:824px;">光标</div>
<div class="rp" style="top:846px;">光标</div>


<!-- palette -->
<div class="abs" style="left:1004px;top:82px;width:206px;height:90px;background:#f8f8f8;border:1px solid #e0e0e0;box-sizing:border-box;border-radius:3px;box-shadow:0 1px 4px rgba(0,0,0,0.15);"></div>
<div class="abs" style="left:1005px;top:83px;width:204px;height:22px;background:#eeeeee;border-bottom:1px solid #d8d8d8;border-radius:3px 3px 0 0;"></div>
<div class="abs" style="left:1009px;top:85px;font-size:12px;color:#333;line-height:16px;white-space:nowrap;">绘图工具</div>
<div class="abs" style="left:1194px;top:92px;width:12px;height:1.6px;background:#777;"></div>
<svg class="abs" style="left:1004px;top:105px" width="206" height="67" viewBox="1004 105 206 67">
<g fill="none" stroke="#333" stroke-width="1.1">
 <!-- pin -->
 <circle cx="1014.6" cy="129.5" r="1.6"/><path d="M1016.2 129.5h12.5 M1028.7 126v7 M1031.5 126.5v6.5 M1031.5 126.5l-1 0.8" />
 <path d="M1022.2 122.5l1.2-0.8v5.5" stroke-width="0.9"/>
 <!-- wire -->
 <path d="M1053 116.4l-12.7 12.8 21.2-4-12.8 12.3" stroke-width="1.2"/>
 <!-- bezier -->
 <path d="M1070.5 126C1070.5 131 1072 134.5 1074.5 134.5C1078 134.5 1078.5 127 1079 125C1079.5 122 1080.5 118.5 1083.5 118.5C1086.5 118.5 1087.8 123 1087.8 127.5" stroke-width="1.1"/>
 <!-- arc + -->
 <path d="M1111 135a7.5 7.5 0 1 1 4-7" /><path d="M1107 124.5v5 M1104.5 127h5" stroke-width="0.9"/>
 <!-- arrow > -->
 <path d="M1125.5 119l17 8.5-17 8.5 9-8.5z" stroke-width="1"/>
 <!-- T -->
 <path d="M1156 120H1170.2V124.5L1168.5 122.3H1165.6V133.5L1168 134.6H1158.2L1160.6 133.5V122.3H1157.7L1156 124.5Z" stroke-width="1"/>
 <!-- pencil -->
 <path d="M1183 136l1.5-5 12-12 3.5 3.5-12 12z M1184.5 131l3.5 3.5 M1186.5 129.5l10.5-10.5" stroke-width="1"/>
 <!-- rect -->
 <rect x="1015" y="147.5" width="15.5" height="15"/>
 <!-- chevron -->
 <path d="M1041 147.5h13.5l6.3 7.5-6.3 7.5h-13.5l6.5-7.5z" stroke-width="1.1"/>
 <!-- circle -->
 <circle cx="1078.8" cy="155.2" r="8.1"/>
 <!-- pie -->
 <path d="M1113 149a8.5 8.5 0 1 0 0 12l-6-6z"/>
 <!-- image -->
 <rect x="1126.5" y="148" width="17.5" height="14"/><path d="M1126.5 157q4-4 8 0t9.5-3" /><circle cx="1139.5" cy="151.5" r="1" fill="#333"/>
 <!-- hand -->
 <path d="M1160 162q-4-3-5-8l1-1 3 3v-9q0-1.5 1.3-1.5t1.3 1.5v-2q0-1.5 1.3-1.5t1.3 1.5v1q0-1.5 1.3-1.5t1.3 1.5v2q0-1.5 1.3-1.5t1.3 1.5v7q0 5-3 7.5z M1161.5 147v6 M1164.5 146v6.5 M1167.5 147v6"/>
 <!-- corner arrows -->
 <path d="M1185.5 148.5v13 M1185.5 148.5h12 M1183.5 159.5l2 3 2-3 M1195 146.5l3 2-3 2"/><circle cx="1185.5" cy="148.5" r="1.3" fill="#333"/>
</g>
</svg>


<!-- menus -->
<div class="menu" style="left:153.5px;top:2px;width:188.5px;height:201.5px;box-sizing:border-box;"></div>
<div class="abs" style="left:156px;top:146px;width:181px;height:24px;background:#5487fc;"></div>
<div class="abs" style="left:156px;top:56px;width:183px;height:1px;background:#cacaca;"></div>
<div class="abs" style="left:156px;top:111px;width:183px;height:1px;background:#cacaca;"></div>
<div class="abs" style="left:156px;top:142px;width:183px;height:1px;background:#cacaca;"></div>
<div class="abs" style="left:156px;top:173px;width:183px;height:1px;background:#cacaca;"></div>
<div class="abs" style="left:182px;top:9px;font-size:13px;line-height:16px;color:#333;white-space:nowrap;">新建</div>
<div class="abs" style="left:182px;top:33px;font-size:13px;line-height:16px;color:#333;white-space:nowrap;">打开</div>
<div class="abs" style="left:182px;top:64px;font-size:13px;line-height:16px;color:#333;white-space:nowrap;">保存...</div>
<div class="abs" style="left:291.5px;top:64px;font-size:12.5px;line-height:16px;color:#333;white-space:nowrap;">Ctrl+S</div>
<div class="abs" style="left:182px;top:89px;font-size:13px;line-height:16px;color:#333;white-space:nowrap;">另存为...</div>
<div class="abs" style="left:182px;top:119px;font-size:13px;line-height:16px;color:#333;white-space:nowrap;">导入</div>
<div class="abs" style="left:182px;top:150px;font-size:13px;line-height:16px;color:#fff;white-space:nowrap;">导出</div>
<div class="abs" style="left:182px;top:181px;font-size:13px;line-height:16px;color:#333;white-space:nowrap;">文件源码...</div>
<svg class="abs" style="left:150px;top:0" width="200" height="205" viewBox="150 0 200 205">
 <path d="M321 13v8.5l4-4.25z M321 37v8.5l4-4.25z M321 123v8.5l4-4.25z" fill="#222"/>
 <path d="M321 154v8.5l4-4.25z" fill="#fff"/>
 <!-- new doc -->
 <path d="M162.5 10.5h8.5l3.5 3.5v11.5h-12z" fill="#f4f6fa" stroke="#8a98a8" stroke-width="0.9"/>
 <path d="M169 21h7 M172.5 17.5v7" stroke="#2eaa2e" stroke-width="2.4"/>
 <!-- open folder -->
 <path d="M161 36.5h5l1.5 1.5h7.5v9.5h-14z" fill="#e8c040" stroke="#a88418" stroke-width="0.9"/>
 <path d="M161.5 47.5l2-6.5h12.5l-1.5 6.5z" fill="#fde68a" stroke="#a88418" stroke-width="0.9"/>
 <!-- save floppy -->
 <rect x="161" y="66" width="14" height="14" rx="1" fill="#4b4fb0" stroke="#2a2c80" stroke-width="0.8"/>
 <rect x="163.5" y="66.5" width="9" height="6" fill="#e8ecf4"/>
 <rect x="164.5" y="75.5" width="7" height="4.5" fill="#222"/>
 <!-- import -->
 <path d="M161.5 120.5h12.5v14.5h-12.5z" fill="#f0f4fa" stroke="#5a7aa8" stroke-width="0.9"/>
 <path d="M163.5 123h8" stroke="#5a7aa8" stroke-width="1"/>
 <path d="M164.5 129.5l4-3.5v2h7v3h-7v2z" fill="#3aaa3a"/>
 <!-- export -->
 <path d="M161.5 151.5h12.5v14.5h-12.5z" fill="#f0f4fa" stroke="#5a7aa8" stroke-width="0.9"/>
 <path d="M163.5 154h8" stroke="#5a7aa8" stroke-width="1"/>
 <path d="M177 159.5l-4-3.5v2h-7v3h7v2z" fill="#3aaa3a"/>
 <!-- pencil -->
 <path d="M161.5 196.5l1.3-4.3 9.7-9.7 3 3-9.7 9.7z" fill="#3cae3c" stroke="#1d6e1d" stroke-width="0.8"/>
 <path d="M161.5 196.5l1.3-4.3 3 3z" fill="#e8d8b0"/>
</svg>

<div class="menu" style="left:337.5px;top:143px;width:155px;height:156px;box-sizing:border-box;border-color:#e2e2e2;box-shadow:-2px 1px 4px rgba(0,0,0,0.12),2px 2px 3px rgba(0,0,0,0.15);"></div>
<div class="abs" style="left:340px;top:225px;width:150px;height:23.5px;background:#5487fc;"></div>
<div class="abs" style="left:340px;top:221px;width:150px;height:1px;background:#cacaca;"></div>
<div class="abs" style="left:366px;top:150px;font-size:13px;line-height:16px;color:#333;white-space:nowrap;">PDF...</div>
<div class="abs" style="left:366px;top:174px;font-size:13px;line-height:16px;color:#333;white-space:nowrap;">PNG...</div>
<div class="abs" style="left:366px;top:198px;font-size:13px;line-height:16px;color:#333;white-space:nowrap;">SVG...</div>
<div class="abs" style="left:366px;top:229px;font-size:13px;line-height:16px;color:#fff;white-space:nowrap;">Altium Designer...</div>
<div class="abs" style="left:366px;top:254px;font-size:13px;line-height:16px;color:#333;white-space:nowrap;">嘉立创EDA...</div>
<div class="abs" style="left:366px;top:277px;font-size:13px;line-height:16px;color:#333;white-space:nowrap;">SVG源码...</div>


<div class="abs" style="left:1124px;top:826px;font-size:14px;color:rgba(120,120,120,0.85);line-height:18px;white-space:nowrap;">CSDN @大只szu</div>
</body></html>
